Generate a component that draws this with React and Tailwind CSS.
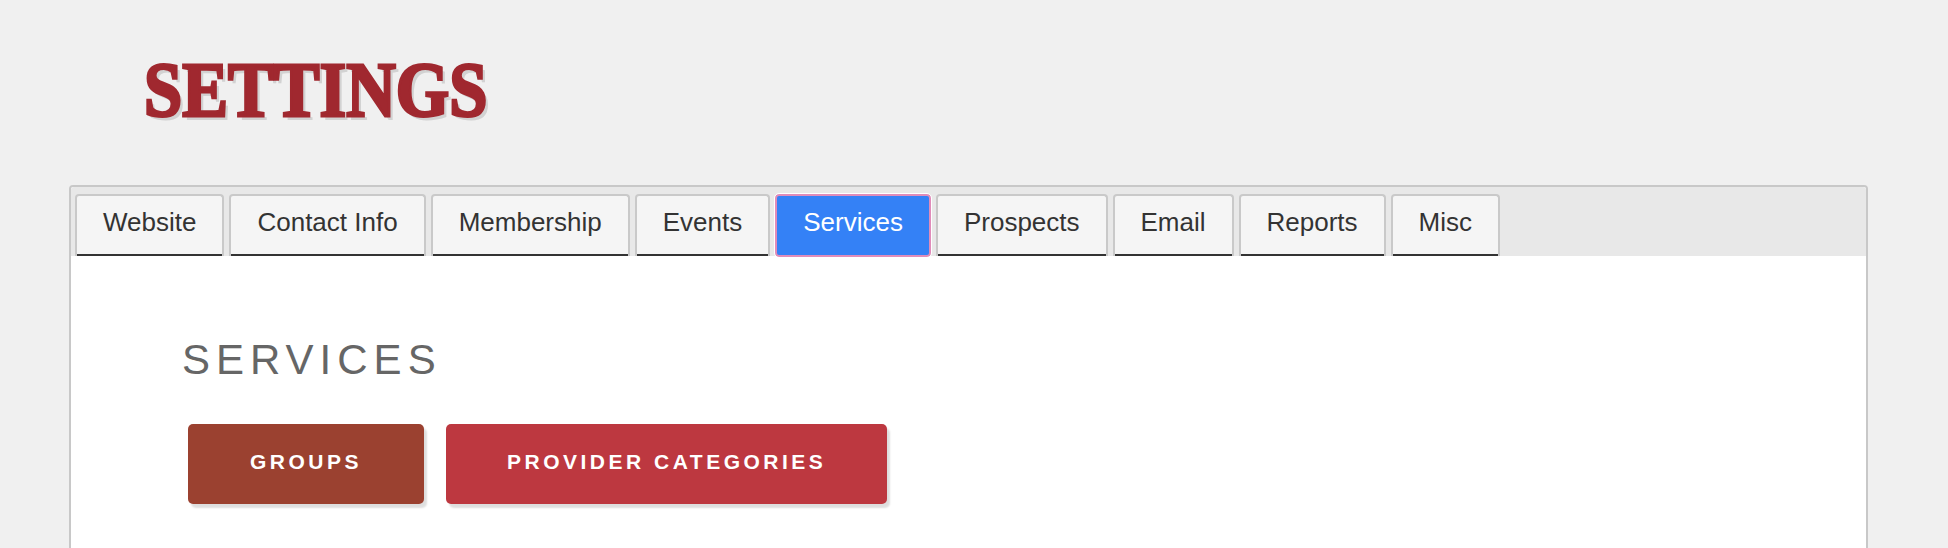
const tabs = [
  "Website",
  "Contact Info",
  "Membership",
  "Events",
  "Services",
  "Prospects",
  "Email",
  "Reports",
  "Misc",
];

function Tab({ label, active }) {
  if (active) {
    return (
      <div className="h-[63px] px-[26px] pb-[7px] flex items-center rounded-[4px] border-2 border-[#e08cba] bg-[#3481f6] text-white outline outline-1 outline-white">
        {label}
      </div>
    );
  }
  return (
    <div className="h-[62px] px-[26px] pb-[7px] flex items-center rounded-t-[4px] border-2 border-b-0 border-[#c9c9c9] bg-[#f5f5f5] text-[#333] shadow-[inset_0_-2px_0_#333]">
      {label}
    </div>
  );
}

export default function App() {
  return (
    <div className="min-h-screen bg-[#f0f0f0] pt-[51px] font-['Liberation_Sans',Arial,sans-serif]">
      {/* heavy slab-style heading: bold serif thickened with a stroke */}
      <h1 className="ml-[144px] w-fit origin-left scale-x-[0.88] text-[78px] leading-none font-bold text-[#a0282f] font-['Liberation_Serif',serif] [-webkit-text-stroke:3px_#a0282f] [text-shadow:4px_4px_0_#d2d2d2]">
        SETTINGS
      </h1>

      <div className="ml-[69px] w-[1799px] mt-[56px] border-2 border-[#c8c8c8] rounded-t-[4px] bg-white">
        <div className="flex items-start gap-[5px] bg-[#e8e8e8] pl-[4px] pt-[7px] h-[69px] text-[26px] rounded-t-[3px]">
          {tabs.map((t) => (
            <Tab key={t} label={t} active={t === "Services"} />
          ))}
        </div>

        <div className="pl-[111px] pt-[80px] pb-[60px]">
          <h2 className="text-[42px] leading-[48px] tracking-[6px] text-[#666]">
            SERVICES
          </h2>
          <div className="mt-[40px] ml-[6px] flex gap-[22px]">
            <button className="h-[80px] px-[62px] pb-[4px] rounded-[5px] bg-[#9b4130] text-white text-[21px] font-bold tracking-[3.5px] shadow-[3px_4px_2px_rgba(0,0,0,0.13)]">
              GROUPS
            </button>
            <button className="h-[80px] px-[61px] pb-[4px] rounded-[5px] bg-[#bd3840] text-white text-[21px] font-bold tracking-[3.5px] shadow-[3px_4px_2px_rgba(0,0,0,0.13)]">
              PROVIDER CATEGORIES
            </button>
          </div>
        </div>
      </div>
    </div>
  );
}
